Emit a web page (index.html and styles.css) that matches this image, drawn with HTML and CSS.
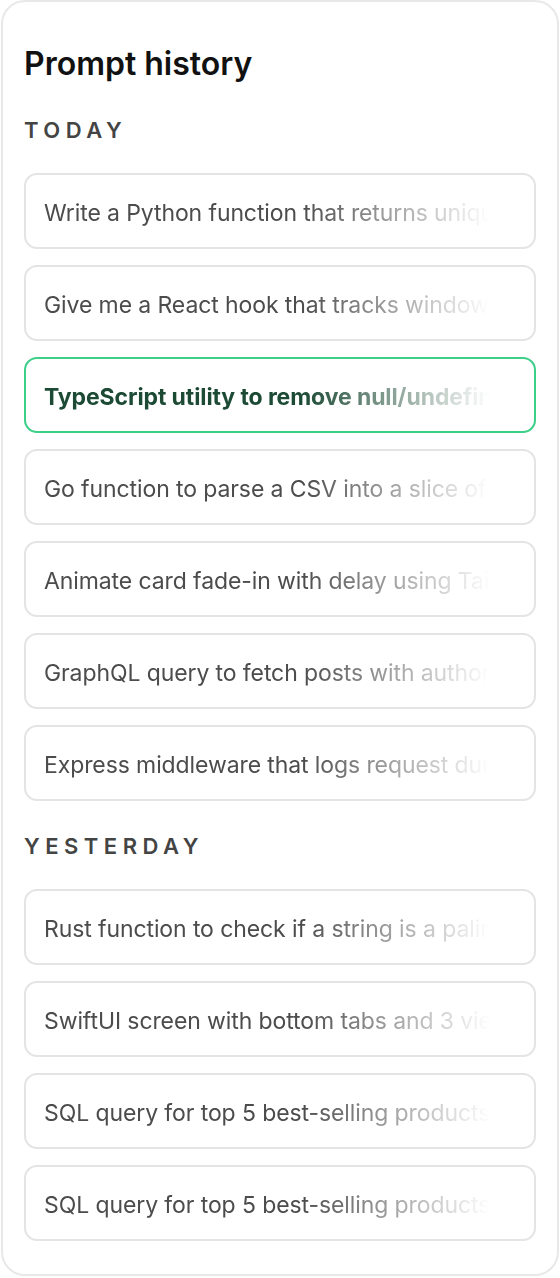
FILE: index.html
```html
<!DOCTYPE html>
<html lang="en">
<head>
<meta charset="utf-8">
<title>Prompt history</title>
<link rel="stylesheet" href="styles.css">
</head>
<body>
<div class="card">
  <h1 class="title">Prompt history</h1>

  <h2 class="label label-first">Today</h2>
  <ul class="list">
    <li class="item"><span class="text">Write a Python function that returns unique values from a list</span></li>
    <li class="item"><span class="text">Give me a React hook that tracks window size</span></li>
    <li class="item item-active"><span class="text">TypeScript utility to remove null/undefined keys</span></li>
    <li class="item"><span class="text">Go function to parse a CSV into a slice of structs</span></li>
    <li class="item"><span class="text">Animate card fade-in with delay using Tailwind</span></li>
    <li class="item"><span class="text">GraphQL query to fetch posts with author info</span></li>
    <li class="item"><span class="text">Express middleware that logs request duration</span></li>
  </ul>

  <h2 class="label">Yesterday</h2>
  <ul class="list">
    <li class="item"><span class="text">Rust function to check if a string is a palindrome</span></li>
    <li class="item"><span class="text">SwiftUI screen with bottom tabs and 3 views</span></li>
    <li class="item"><span class="text">SQL query for top 5 best-selling products this month</span></li>
    <li class="item"><span class="text">SQL query for top 5 best-selling products this month</span></li>
  </ul>
</div>
</body>
</html>
```

FILE: styles.css
```css
* { box-sizing: border-box; }

html, body {
  margin: 0;
  padding: 0;
  background: #ffffff;
}

body {
  font-family: "Inter", "Noto Sans", sans-serif;
  color: #1a1a1a;
}

.card {
  margin: 0 1px;
  width: 558px;
  border: 2px solid #e8e8e8;
  border-radius: 24px;
  padding: 44px 21px 33px;
  background: #fff;
}

.title {
  margin: 0;
  font-size: 32px;
  line-height: 36px;
  font-weight: 600;
  letter-spacing: 0;
  color: #111;
}

.label {
  margin: 33px 0 31px;
  font-size: 22px;
  line-height: 24px;
  font-weight: 600;
  letter-spacing: 5.5px;
  text-transform: uppercase;
  color: #444;
}

.label-first {
  margin-top: 36px;
}

.list {
  list-style: none;
  margin: 0;
  padding: 0;
  display: flex;
  flex-direction: column;
  gap: 16px;
}

.item {
  height: 76px;
  border: 2px solid #e4e4e4;
  border-radius: 13px;
  padding: 3px 44px 0 18px;
  display: flex;
  align-items: center;
  overflow: hidden;
}

.text {
  display: block;
  width: 100%;
  white-space: nowrap;
  overflow: hidden;
  font-size: 23px;
  line-height: 30px;
  letter-spacing: -0.1px;
  color: #4c4c4c;
  -webkit-mask-image: linear-gradient(90deg, #000 58%, transparent 100%);
  mask-image: linear-gradient(90deg, #000 58%, transparent 100%);
}

.item-active {
  border-color: #3ccf88;
}

.item-active .text {
  font-weight: 700;
  color: #1c4a35;
}
```
